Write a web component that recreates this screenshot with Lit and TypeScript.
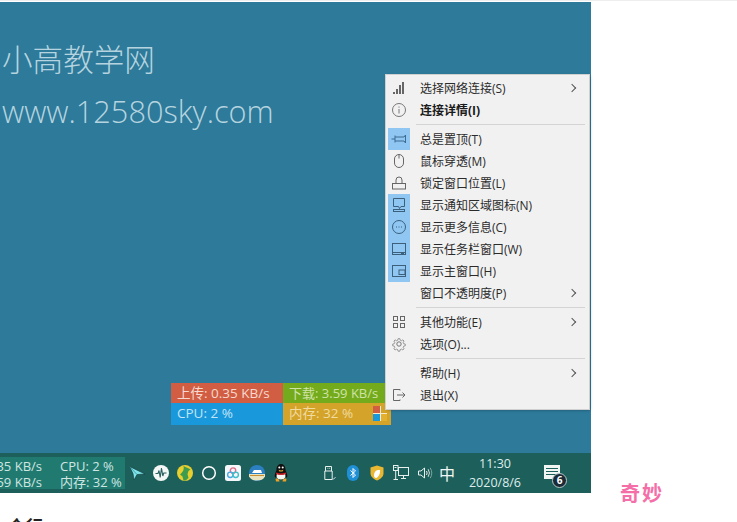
import { LitElement, html, css, svg } from "lit";
import { customElement } from "lit/decorators.js";

const I = (body: unknown, w = 16, h = 16, vb = "0 0 16 16") =>
  html`<svg width=${w} height=${h} viewBox=${vb} fill="none" stroke="currentColor" stroke-width="1">${body}</svg>`;

type Row = { icon?: unknown; label: string; sub?: boolean; on?: boolean; bold?: boolean } | "sep";

const rows: Row[] = [
  { label: "选择网络连接(S)", sub: true, icon: I(svg`<g fill="#666" stroke="none"><rect x="2" y="12" width="2" height="2"/><rect x="5" y="9" width="2" height="5"/><rect x="8" y="5" width="2" height="9"/><rect x="11" y="2" width="2" height="12"/></g>`) },
  { label: "连接详情(I)", bold: true, icon: I(svg`<circle cx="8" cy="8" r="6.5" stroke="#777"/><path d="M8 7v4.5M8 4.5v1.2" stroke="#777"/>`) },
  "sep",
  { label: "总是置顶(T)", on: true, icon: I(svg`<path d="M0.5 8h3.5M4 4.5v7M4 6h9l1.5-2v8L13 10H4" stroke="#3c6a90"/>`) },
  { label: "鼠标穿透(M)", icon: I(svg`<rect x="3.5" y="1.5" width="9" height="13" rx="4.5" stroke="#666"/><path d="M8 1.5v4" stroke="#666"/>`) },
  { label: "锁定窗口位置(L)", icon: I(svg`<rect x="1.5" y="8.5" width="13" height="5.5" stroke="#666"/><path d="M5 8.5V5a3 3 0 0 1 6 0v3.5" stroke="#666"/>`) },
  { label: "显示通知区域图标(N)", on: true, icon: I(svg`<path d="M2.5 1.5h11v8H10l-1.5 2-1-2h-5z" stroke="#3c5f7c"/><rect x="2.5" y="12.5" width="11" height="2" stroke="#3c5f7c"/>`) },
  { label: "显示更多信息(C)", on: true, icon: I(svg`<circle cx="8" cy="8" r="6.5" stroke="#3c5f7c"/><path d="M5 8h1M7.5 8h1M10 8h1" stroke="#3c5f7c"/>`) },
  { label: "显示任务栏窗口(W)", on: true, icon: I(svg`<rect x="1.5" y="2.5" width="13" height="11" stroke="#3c5f7c"/><path d="M2 11.5h12M10 12.5h3" stroke="#3c5f7c"/>`) },
  { label: "显示主窗口(H)", on: true, icon: I(svg`<rect x="1.5" y="2.5" width="13" height="11" stroke="#3c5f7c"/><rect x="8" y="7" width="6" height="4.5" stroke="#3c5f7c"/>`) },
  { label: "窗口不透明度(P)", sub: true },
  "sep",
  { label: "其他功能(E)", sub: true, icon: I(svg`<g stroke="#666"><rect x="2.5" y="2.5" width="4" height="4"/><rect x="9.5" y="2.5" width="4" height="4"/><rect x="2.5" y="9.5" width="4" height="4"/><rect x="9.5" y="9.5" width="4" height="4"/></g>`) },
  { label: "选项(O)...", icon: I(svg`<circle cx="8" cy="8" r="2.2" stroke="#777"/><path d="M7 1.8h2l.4 1.8 1.5.6 1.6-1 1.4 1.4-1 1.6.6 1.5 1.8.4v2l-1.8.4-.6 1.5 1 1.6-1.4 1.4-1.6-1-1.5.6-.4 1.8H7l-.4-1.8-1.5-.6-1.6 1-1.4-1.4 1-1.6-.6-1.5-1.8-.4v-2l1.8-.4.6-1.5-1-1.6 1.4-1.4 1.6 1 1.5-.6z" stroke="#888" transform="translate(1.1 1.1) scale(.86)"/>`) },
  "sep",
  { label: "帮助(H)", sub: true },
  { label: "退出(X)", icon: I(svg`<path d="M9 3.5V2.5H2.5v11H9v-1M6 8h8M11.5 5.5 14 8l-2.5 2.5" stroke="#666"/>`) },
];

const tray = [
  I(svg`<path d="M0.5 1.5 16 9 8 9.5l-3 5.5L4 8.5z" fill="#7fe3ea" stroke="#10393b" stroke-width=".6"/><path d="M0.5 1.5 8 9.5" stroke="#2a8a90" stroke-width=".7"/>`),
  I(svg`<circle cx="8" cy="8" r="8" fill="#f4f7f6" stroke="none"/><path d="M2.5 8.5H5l1-3 1.2 7L8.5 3l1.3 8 1-3H13.5" stroke="#2a5f5f" stroke-width="1.1"/>`),
  I(svg`<circle cx="8" cy="8" r="8" fill="#e8cf2f" stroke="none"/><path d="M6.5 1c2.5 2 5 1.5 7 3.5l-2 1.5-1 3 1 4-3 2.5H6.5l-1-4-2.5-2c2-2 4.5-4 3.5-8.5z" fill="#3f9c4e" stroke="none"/>`),
  I(svg`<circle cx="8" cy="8" r="6.3" stroke="#fff" stroke-width="1.5"/>`),
  I(svg`<rect width="16" height="16" rx="2.5" fill="#f5f8fa" stroke="none"/><circle cx="8" cy="5.6" r="2.7" stroke="#e06b8a" stroke-width="1.4"/><circle cx="5.3" cy="9.8" r="2.7" stroke="#49a9e0" stroke-width="1.4"/><circle cx="10.7" cy="9.8" r="2.7" stroke="#3fc0c8" stroke-width="1.4"/>`),
  I(svg`<circle cx="8" cy="8" r="8" fill="#2c7fc0" stroke="none"/><path d="M0 9h16v2.5c-2 3-4 4-8 4s-6-1-8-4z" fill="#e9e3c0" stroke="none"/><path d="M3 8h10l-1-3H5z" fill="#fff" stroke="none"/><path d="M1 10.5h14" stroke="#c98f30"/>`),
  html`<svg width="16" height="18" viewBox="0 0 16 18"><path d="M8 0c3 0 4.5 2.5 4.5 5.5 0 1.5 1 2.5 1.5 4.5.6 2.5.2 3.5-.6 3.5l-.9-1c-.5 2-2 3-4.5 3s-4-1-4.500-3l-.9 1c-.8 0-1.200-1-.6-3.500.5-2 1.500-3 1.500-4.500C3.500 2.500 5 0 8 0z" fill="#111"/><path d="M4 10c2 1 6 1 8 0 1 2 .5 5.500-4 5.500S3 12 4 10z" fill="#f7f7f2"/><path d="M3.300 8.500c2.800 1.300 6.600 1.300 9.400 0l.3 1.600c-3 1.200-7 1.200-10 0z" fill="#d8242a"/><path d="M5.500 5.800q2.500 1.400 5 0l-1 1.700h-3z" fill="#f0b020"/><circle cx="6.300" cy="3.600" r="1" fill="#fff"/><circle cx="9.700" cy="3.600" r="1" fill="#fff"/><path d="M2.500 15c1.500-.8 3.500-.5 4 2.500h-3.500zM13.500 15c-1.500-.8-3.500-.5-4 2.500h3.500z" fill="#f0a020"/></svg>`,
];

const right = [
  I(svg`<path d="M4.5 1.5h6v4.5h.7v8.5H3.8V6h.7zM6.5 3.3h.8M8.3 3.3h.8M4 6h7" stroke="#e8f0ee"/><path d="M11.2 14l1.600 0 1.800-2" stroke="#bcd"/>`),
  I(svg`<rect x="2" y="0" width="12" height="16" rx="6" fill="#1f8fd6" stroke="none"/><path d="M5.5 5.5 10.5 10 8 12.5v-9l2.5 2.500L5.500 10.500" stroke="#fff"/>`),
  I(svg`<path d="M8 0.5 14.5 2.5v6c0 3-3 5.500-6.500 7-3.500-1.500-6.500-4-6.500-7v-6z" fill="#e9b732" stroke="none"/><path d="M11 5c-3-.6-6 1-6 5.500 0 1 .6 2 1.500 2.600C9 13 11.500 9 11 5z" fill="#fff" stroke="none"/>`),
  I(svg`<rect x="5.5" y="2.5" width="10" height="8" stroke="#e8f0ee"/><rect x="0.5" y="0.5" width="4.5" height="5" stroke="#e8f0ee" fill="#1c5f5b"/><path d="M2.700 5.500v9M.5 14.500h4.500M10.500 10.500v3M8 13.500h5M1.500 2.500h2" stroke="#e8f0ee"/>`),
  I(svg`<path d="M1.5 6v4h2.500l3.500 3V3L4 6z" stroke="#e8f0ee"/><path d="M9.500 6q1.300 2 0 4" stroke="#e8f0ee"/><path d="M11.200 4.200q2.500 3.800 0 7.600" stroke="#d4e2df"/><path d="M13.200 2.800q3.200 5.200 0 10.400" stroke="#7fa5a0"/>`),
];

@customElement("app-root")
export class AppRoot extends LitElement {
  static styles = css`
    :host { display: block; width: 737px; height: 522px; overflow: hidden; background: #fff;
      font-family: "Open Sans", "Noto Sans CJK SC", sans-serif; position: relative; }
    .topline { height: 1px; background: #eeeeee; }
    .gap { height: 1px; width: 591px; background: #fff; }
    .screen { width: 591px; height: 491px; display: flex; flex-direction: column; position: relative; }
    .desktop { flex: 1; background: #2d7a9b; padding: 38px 0 0 2px; color: #b6d4df; min-height: 0; }
    .wm1 { font: 300 30.6px/36px "Noto Sans CJK SC", sans-serif; }
    .wm2 { font: 300 30.7px/36px "Open Sans", sans-serif; margin-top: 17px; }

    .float { position: absolute; left: 171px; top: 381px; width: 220px; height: 42px;
      display: grid; grid-template-columns: 112px 108px; grid-template-rows: 20px 22px; }
    .float > div { font-size: 13.5px; line-height: 20px; padding-left: 6px; color: #d8e6ea; white-space: nowrap; position: relative; }
    .c1 { background: #d15e42; color: #f6d9cf !important; }
    .float > .c2 { background: #74ab1c; color: #cfe3a8; font-size: 13px; }
    .c3 { background: #1a98dc; color: #c3e5f6 !important; }
    .c4 { background: #d4a329; color: #f0dba0 !important; }
    .flag { position: absolute; left: 90px; top: 3px; width: 14px; height: 15px; display: grid; grid-template: 1fr 1fr / 1fr 1fr; gap: 1px; background: #f3ead0; }
    .flag i { display: block; }

    .menu { position: absolute; left: 386px; top: 73px; width: 203px; height: 334px; box-sizing: border-box; padding: 2px;
      background: #f1f1f1; box-shadow: 0 0 0 1px #d0d0d0, 1px 1px 3px rgba(0,0,0,.35); color: #2b2b2b; font-size: 12px; }
    .row { height: 22px; display: flex; align-items: center; position: relative; }
    .ic { width: 22px; height: 22px; display: flex; align-items: center; justify-content: center; color: #666; flex: none; }
    .row.on .ic { background: #8fc6f2; }
    .lb { margin-left: 10px; flex: 1; white-space: nowrap; line-height: 22px; padding-top: 1px; }
    .row.bold .lb { font-weight: 700; color: #1a1a1a; }
    .arrow { width: 5px; height: 5px; margin-right: 12px; flex: none; border-top: 1px solid #555; border-right: 1px solid #555; transform: rotate(45deg); }
    .sep { height: 7px; display: flex; align-items: center; padding: 0 2px 0 28px; }
    .sep i { display: block; height: 1px; width: 100%; background: #d4d4d4; }

    .taskbar { height: 40px; background: #1c5f5b; display: flex; align-items: center; color: #e6f0ee; flex: none; overflow: hidden; }
    .net { width: 125px; height: 32px; background: #217a70; flex: none; font-size: 13px; line-height: 16px; color: #cfe6e2; overflow: hidden; display: flex; padding-top: 1px; box-sizing: border-box; }
    .speed { width: 60px; flex: none; }
    .speed span { display: flex; justify-content: flex-end; width: 42px; white-space: nowrap; }
    .load { white-space: nowrap; }
    .slot { width: 24px; height: 24px; display: flex; align-items: center; justify-content: center; flex: none; }
    .tray2 { margin-left: 24px; display: flex; align-items: center; }
    .ime { font: 400 16px/24px "Noto Sans CJK SC", sans-serif; color: #f2f6f5; margin-left: -2px; }
    .clock { width: 68px; margin-left: 2px; text-align: center; font-size: 12.5px; line-height: 19px; color: #dfeeeb; flex: none; }
    .notif { width: 46px; display: flex; justify-content: center; flex: none; position: relative; }
    .bubble { width: 16px; height: 14px; background: #f1f5f4; position: relative; top: -1px; }
    .bubble i { position: absolute; display: block; left: 2px; right: 2px; height: 1px; background: #1c5f5b; }
    .badge { position: absolute; left: 23px; top: 7px; width: 15px; height: 15px; border-radius: 50%; background: #1a2a36; border: 1px solid #b8c8c8;
      box-sizing: border-box; color: #fff; font: 700 10px/13px "Open Sans", sans-serif; text-align: center; }

    .under { display: flex; position: relative; height: 29px; }
    .miao { position: absolute; left: 620px; top: -12px; font: 700 20px/24px "Noto Sans CJK SC", sans-serif; color: #f46fa8; letter-spacing: 2px; }
    .cut { position: absolute; left: 8px; top: 22px; font: 700 17px/22px "Noto Sans CJK SC", sans-serif; color: #222; letter-spacing: 1px; }
  `;

  render() {
    return html`
      <div class="topline"></div>
      <div class="gap"></div>
      <div class="screen">
        <div class="desktop">
          <div class="wm1">小高教学网</div>
          <div class="wm2">www.12580sky.com</div>
        </div>
        <div class="float">
          <div class="c1">上传: 0.35 KB/s</div>
          <div class="c2">下载: 3.59 KB/s</div>
          <div class="c3">CPU: 2 %</div>
          <div class="c4">内存: 32 %
            <span class="flag"><i style="background:#d15e42"></i><i style="background:#d4a329"></i><i style="background:#1a98dc"></i><i style="background:#e3b02f"></i></span>
          </div>
        </div>
        <div class="menu">
          ${rows.map((r) =>
            r === "sep"
              ? html`<div class="sep"><i></i></div>`
              : html`<div class="row ${r.on ? "on" : ""} ${r.bold ? "bold" : ""}">
                  <span class="ic">${r.icon ?? ""}</span>
                  <span class="lb">${r.label}</span>
                  ${r.sub ? html`<span class="arrow"></span>` : ""}
                </div>`
          )}
        </div>
        <div class="taskbar">
          <div class="net">
            <div class="speed"><span>0.35 KB/s</span><span>3.59 KB/s</span></div>
            <div class="load">CPU: 2 %<br />内存: 32 %</div>
          </div>
          ${tray.map((t) => html`<span class="slot">${t}</span>`)}
          <div class="tray2">
            ${right.map((t) => html`<span class="slot">${t}</span>`)}
            <span class="slot ime">中</span>
          </div>
          <div class="clock">11:30<br />2020/8/6</div>
          <div class="notif">
            <div class="bubble"><i style="top:3px"></i><i style="top:6px"></i><i style="top:9px"></i></div>
            <span class="badge">6</span>
          </div>
        </div>
      </div>
      <div class="under">
        <span class="miao">奇妙</span>
        <span class="cut">个行</span>
      </div>
    `;
  }
}
